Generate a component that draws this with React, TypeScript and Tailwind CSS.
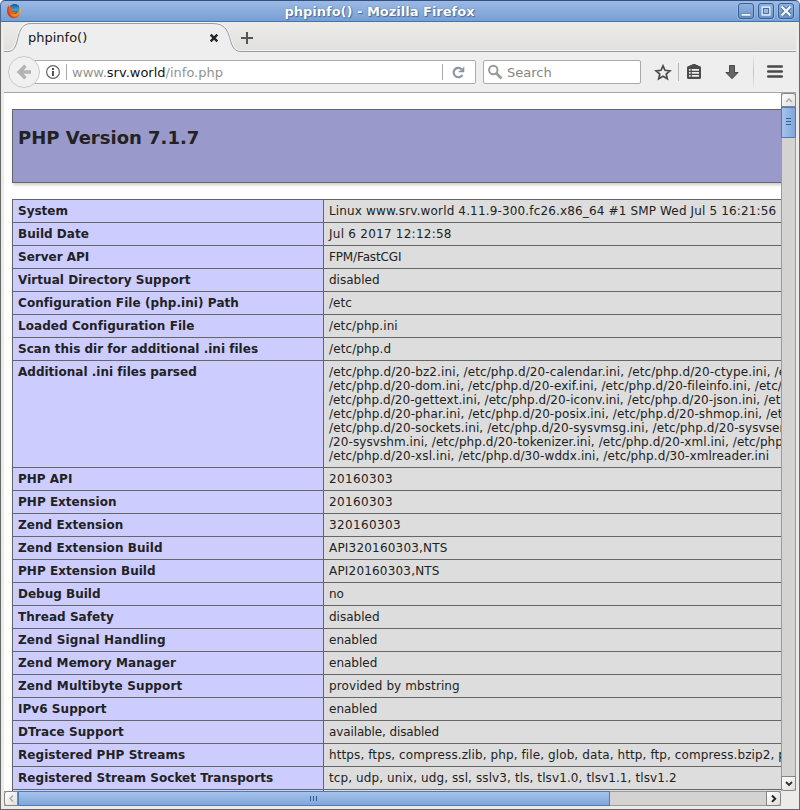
import React from "react";

// A line of table text with its tracking in pixels.
type Line = [text: string, tracking: number];

const rows: { name: Line; value: Line[] }[] = [
  { name: ["System", 0], value: [["Linux www.srv.world 4.11.9-300.fc26.x86_64 #1 SMP Wed Jul 5 16:21:56", 0.152]] },
  { name: ["Build Date", 0.03], value: [["Jul 6 2017 12:12:58", 0.25]] },
  { name: ["Server API", 0], value: [["FPM/FastCGI", -0.14]] },
  { name: ["Virtual Directory Support", 0.05], value: [["disabled", 0]] },
  { name: ["Configuration File (php.ini) Path", 0.07], value: [["/etc", 0]] },
  { name: ["Loaded Configuration File", 0.06], value: [["/etc/php.ini", 0.09]] },
  { name: ["Scan this dir for additional .ini files", 0.02], value: [["/etc/php.d", 0.12]] },
  {
    name: ["Additional .ini files parsed", 0.01],
    value: [
      ["/etc/php.d/20-bz2.ini, /etc/php.d/20-calendar.ini, /etc/php.d/20-ctype.ini, /e", 0.11],
      ["/etc/php.d/20-dom.ini, /etc/php.d/20-exif.ini, /etc/php.d/20-fileinfo.ini, /etc/", 0.085],
      ["/etc/php.d/20-gettext.ini, /etc/php.d/20-iconv.ini, /etc/php.d/20-json.ini, /et", 0.065],
      ["/etc/php.d/20-phar.ini, /etc/php.d/20-posix.ini, /etc/php.d/20-shmop.ini, /et", 0.1],
      ["/etc/php.d/20-sockets.ini, /etc/php.d/20-sysvmsg.ini, /etc/php.d/20-sysvsem", 0.1],
      ["/20-sysvshm.ini, /etc/php.d/20-tokenizer.ini, /etc/php.d/20-xml.ini, /etc/php", 0.07],
      ["/etc/php.d/20-xsl.ini, /etc/php.d/30-wddx.ini, /etc/php.d/30-xmlreader.ini", 0.1],
    ],
  },
  { name: ["PHP API", 0], value: [["20160303", 0.365]] },
  { name: ["PHP Extension", 0.02], value: [["20160303", 0.365]] },
  { name: ["Zend Extension", 0.06], value: [["320160303", 0.365]] },
  { name: ["Zend Extension Build", 0.07], value: [["API320160303,NTS", 0.2]] },
  { name: ["PHP Extension Build", 0.04], value: [["API20160303,NTS", 0.19]] },
  { name: ["Debug Build", 0], value: [["no", 0]] },
  { name: ["Thread Safety", 0.04], value: [["disabled", 0]] },
  { name: ["Zend Signal Handling", 0.13], value: [["enabled", 0]] },
  { name: ["Zend Memory Manager", 0.09], value: [["enabled", 0]] },
  { name: ["Zend Multibyte Support", 0.14], value: [["provided by mbstring", 0.1]] },
  { name: ["IPv6 Support", 0.05], value: [["enabled", 0]] },
  { name: ["DTrace Support", 0.09], value: [["available, disabled", -0.12]] },
  { name: ["Registered PHP Streams", 0.06], value: [["https, ftps, compress.zlib, php, file, glob, data, http, ftp, compress.bzip2, p", 0.105]] },
  { name: ["Registered Stream Socket Transports", 0.06], value: [["tcp, udp, unix, udg, ssl, sslv3, tls, tlsv1.0, tlsv1.1, tlsv1.2", 0.105]] },
];

function FirefoxLogo() {
  return (
    <svg width="16" height="16" viewBox="0 0 16 16" className="ml-[5px] shrink-0">
      <defs>
        <linearGradient id="globe" x1="0" x2="0" y1="0" y2="1">
          <stop offset="0" stopColor="#1c4f94" />
          <stop offset=".6" stopColor="#36a5d4" />
          <stop offset="1" stopColor="#195c9c" />
        </linearGradient>
        <linearGradient id="fox" x1="0" x2="1" y1=".7" y2=".2">
          <stop offset="0" stopColor="#c63818" />
          <stop offset=".6" stopColor="#e76a1b" />
          <stop offset="1" stopColor="#fbd449" />
        </linearGradient>
      </defs>
      <path d="M2.3 2.6C3 3 3 3.5 3.5 3.8 6 1 12 .5 14 4.5 15.8 8 14.5 12 12 14 8.5 16.4 3.5 15 1.8 11.5.4 8.5 1 5 2.3 2.6Z" fill="url(#fox)" />
      <circle cx="8.6" cy="5.9" r="5" fill="url(#globe)" />
      <path d="M3 4.3C4 3.7 5.4 3.9 6 4.5 5.8 5.2 6.3 5.6 7.3 5.8 7.2 6.7 6 7.2 6 8.2 6.8 9.4 8.6 8.8 10 9.2 9.2 11.3 6.5 12 4.2 10.2 2.5 8.8 2.2 6 3 4.3Z" fill="#df6422" />
      <path d="M4 10.2C7 12.5 11.5 11.5 12.6 7.5 13.8 10.5 11.5 13.5 8.5 13.6 6 13.5 4.5 12 4 10.2Z" fill="#f18d28" />
    </svg>
  );
}

function WindowButton({ children }: { children: React.ReactNode }) {
  return (
    <div className="h-4 w-4 rounded-[3px] border border-[#365f96] bg-linear-to-b from-[#8fb1de] to-[#6b94cb] shadow-[0_0_0_0.5px_#a9c3e8]">
      <svg width="14" height="14" viewBox="0 0 14 14" className="block">{children}</svg>
    </div>
  );
}

function TitleBar() {
  return (
    <div className="relative flex h-[22px] items-center rounded-t-[5px] border border-t-[#354f7d] border-r-[#47688f] border-b-[#4872ab] border-l-[#47688f] bg-linear-to-b from-[#9bb9e5] to-[#779fd3]">
      <FirefoxLogo />
      <div className="absolute inset-x-0 top-[3px] text-center text-[13px] leading-[15px] font-bold text-white">
        <span className="relative left-[-20.5px] [text-shadow:0_0_1px_#30588e,1px_1px_1px_#456e9f]">phpinfo() - Mozilla Firefox</span>
      </div>
      <div className="mr-[5px] ml-auto flex gap-1">
        <WindowButton><path d="M2 9h10v3.5H2z" fill="#4f76ab" /><path d="M2.5 9.8h9v2h-9z" fill="#eef4fc" /></WindowButton>
        <WindowButton>
          <path d="M2 2h10v10H2z" fill="#4f76ab" />
          <path d="M3 3h8v8H3z" fill="#8aade0" stroke="#eef4fc" strokeWidth="1.3" />
          <path d="M4.5 4.5h5v5h-5z" fill="#9bbae2" stroke="#486fa5" />
        </WindowButton>
        <WindowButton><path d="m3 3 8 8m0-8-8 8" stroke="#3e6498" strokeWidth="4" /><path d="m2.7 2.7 8.6 8.6m0-8.6-8.6 8.6" stroke="#eef4fc" strokeWidth="2.4" /></WindowButton>
      </div>
    </div>
  );
}

function TabStrip() {
  return (
    <div className="relative h-[30px] bg-linear-to-b from-[#ebebea] to-[#e1e0df] text-[13px]">
      <svg width="792" height="30" className="absolute top-0 left-0">
        <path d="M0 31V29.5H4C18 29.5 9 1.5 27 1.5H209C232 1.5 221 29.5 237 29.5H792V31Z" fill="#eee" stroke="#fff" strokeWidth="3" strokeOpacity=".6" />
        <path d="M0 31V29.5H4C18 29.5 9 1.5 27 1.5H209C232 1.5 221 29.5 237 29.5H792V31Z" fill="#eee" stroke="#999b9f" />
        <path d="m206.7 12.7 6.6 6.6m0-6.6-6.6 6.6" stroke="#252525" strokeWidth="2.4" />
        <path d="M243 10v12m-6-6h12" stroke="#555" strokeWidth="2" />
      </svg>
      <span className="relative top-[8px] left-[24px] block w-[70px] leading-[15px] text-[#151515]">phpinfo()</span>
    </div>
  );
}

function Toolbar() {
  return (
    <div className="flex h-[41px] border-b border-[#a6a6a6] bg-[#eee]">
      <div className="relative z-10 mt-1 ml-1 h-8 w-8 shrink-0 rounded-full border border-[#cacaca] bg-[#f0f0f0]">
        <svg width="30" height="30" viewBox="0 0 30 30"><path d="M22 15H10m6.5-6.2L10.3 15l6.2 6.2" fill="none" stroke="#b3b3b3" strokeWidth="3.6" /></svg>
      </div>
      <div className="mt-2 -ml-[10px] flex h-6 w-[446px] shrink-0 items-center rounded-r-[2px] border border-[#aaa] bg-white pl-[14px]">
        <svg width="16" height="16" viewBox="0 0 16 16" className="shrink-0">
          <circle cx="8" cy="8" r="6.4" fill="none" stroke="#666" strokeWidth="1.2" />
          <path d="M8 4v2M8 7v5" stroke="#555" strokeWidth="2" />
        </svg>
        <div className="ml-[5px] h-4 w-px bg-[#aaa]" />
        <div className="ml-[5px] text-[13px] leading-[15px] whitespace-nowrap text-[#929292]">www.<span className="text-[#151515]">srv.world</span>/info.php</div>
        <div className="ml-auto h-4 w-px bg-[#aaa]" />
        <svg width="16" height="16" viewBox="0 0 16 16" className="mr-2 ml-2 shrink-0">
          <path d="M10.6 5.1A4.7 4.7 0 1 0 11.4 11" fill="none" stroke="#8a96a3" strokeWidth="2.2" />
          <path d="M13.3 2.6V8.2H7.7V6.8H9.2Z" fill="#8a96a3" />
        </svg>
      </div>
      <div className="mt-2 ml-[7px] flex h-6 w-[158px] shrink-0 items-center rounded-[2px] border border-[#aaa] bg-white">
        <svg width="16" height="16" viewBox="0 0 16 16" className="ml-[3px]">
          <circle cx="6.3" cy="6" r="4.2" fill="none" stroke="#999" strokeWidth="2" />
          <path d="m9.5 9.5 5 5" stroke="#999" strokeWidth="2.7" />
        </svg>
        <span className="ml-1 text-[13px] leading-[15px] text-[#858585]">Search</span>
      </div>
      <svg width="150" height="40" viewBox="641 52 150 40" className="shrink-0">
        <defs>
          <linearGradient id="fade" x1="0" x2="0" y1="0" y2="1">
            <stop offset="0" stopColor="#c4c4c4" stopOpacity="0" />
            <stop offset=".5" stopColor="#c4c4c4" />
            <stop offset="1" stopColor="#c4c4c4" stopOpacity="0" />
          </linearGradient>
        </defs>
        <path d="m663 65.8 2 4.5 4.9.5-3.7 3.2 1.1 4.8-4.3-2.5-4.3 2.5 1.1-4.8-3.7-3.2 4.9-.5Z" fill="none" stroke="#4b4b4b" strokeWidth="1.7" />
        <path d="M678.5 63v18" stroke="#b5b5b5" />
        <rect x="687" y="66" width="14" height="13" rx="1.5" fill="#4b4b4b" />
        <path d="M689 67c0-1.5 1-2 2.5-2 1-1.3 4-1.3 5 0 1.5 0 2.5.5 2.5 2Z" fill="#4b4b4b" />
        <path d="M689 69.8h1.6m1.2 0H699M689 72.8h1.6m1.2 0H699M689 75.9h1.6m1.2 0H699" stroke="#eee" strokeWidth="1.7" />
        <path d="M729.5 65.5h5v7h3.6l-6.1 6.2-6.1-6.2h3.6Z" fill="#666" stroke="#484848" />
        <rect x="753" y="54" width="1" height="36" fill="url(#fade)" />
        <path d="M768.3 66.5h13.4m-13.4 5h13.4m-13.4 5h13.4" stroke="#494949" strokeWidth="2.7" strokeLinecap="round" />
      </svg>
    </div>
  );
}

function PhpInfo() {
  return (
    <div className="h-[698px] w-[777px] overflow-hidden bg-white pt-4 pl-2 text-[#222]">
      <div className="h-[74px] w-[934px] border border-[#666] bg-[#9999cc] pt-[17px] pl-[5px] text-[18px] leading-[22px] font-bold shadow-[1px_2px_3px_#ccc]">PHP Version 7.1.7</div>
      <div className="mt-4 w-[934px] border-t border-l border-[#666] text-[12px] leading-[14px] shadow-[1px_2px_3px_#ccc]">
        {rows.map(({ name, value }) => (
          <div key={name[0]} className="flex border-b border-[#666]">
            <div className="w-[311px] shrink-0 border-r border-[#666] bg-[#ccccff] py-1 pl-[5px] font-bold whitespace-nowrap" style={{ letterSpacing: name[1] }}>{name[0]}</div>
            <div className="flex-1 bg-[#ddd] py-1 pl-[5px] whitespace-nowrap">
              {value.map(([text, tracking]) => <div key={text} className="w-fit" style={{ letterSpacing: tracking }}>{text}</div>)}
            </div>
          </div>
        ))}
        <div className="flex h-[22px]">
          <div className="w-[311px] border-r border-[#666] bg-[#ccccff]" />
          <div className="flex-1 bg-[#ddd]" />
        </div>
      </div>
    </div>
  );
}

function VerticalScroll() {
  return (
    <div className="flex h-[698px] w-[15px] flex-col border-x border-[#9b9b99] bg-[#d4d3d1]">
      <div className="-mx-px h-[14px] shrink-0 rounded-t-[3px] border border-[#858585] bg-linear-to-br from-white to-[#dededc]">
        <svg width="13" height="12"><path d="m4 8 3-3 3 3" fill="none" stroke="#aaa" strokeWidth="1.5" /></svg>
      </div>
      <div className="-mx-px flex h-[31px] shrink-0 flex-col items-center justify-center gap-[2px] border border-[#4e7bb4] bg-linear-to-r from-[#a6c3eb] to-[#80a7da] pb-[2px]">
        <i className="h-px w-[5px] bg-[#345e97]" /><i className="h-px w-[5px] bg-[#345e97]" /><i className="h-px w-[5px] bg-[#345e97]" />
      </div>
      <div className="-mx-px mt-auto h-[15px] rounded-b-[3px] border border-[#858585] bg-linear-to-br from-white to-[#dededc]">
        <svg width="13" height="13"><path d="m4 5 3 3 3-3" fill="none" stroke="#303030" strokeWidth="1.8" /></svg>
      </div>
    </div>
  );
}

function HorizontalScroll() {
  return (
    <div className="flex h-[15px] w-[777px] border-y border-[#9b9b99] bg-[#d4d3d1]">
      <div className="-my-px w-[14px] rounded-l-[3px] border border-[#858585] bg-linear-to-br from-white to-[#dededc]">
        <svg width="12" height="13"><path d="m8 3.5-3 3 3 3" fill="none" stroke="#aaa" strokeWidth="1.5" /></svg>
      </div>
      <div className="-my-px flex w-[592px] items-center justify-center gap-[2px] border border-[#4e7bb4] bg-linear-to-b from-[#a6c3eb] to-[#80a7da] pr-[2px]">
        <i className="h-[5px] w-px bg-[#345e97]" /><i className="h-[5px] w-px bg-[#345e97]" /><i className="h-[5px] w-px bg-[#345e97]" />
      </div>
      <div className="-my-px ml-auto w-[15px] rounded-r-[3px] border border-[#858585] bg-linear-to-br from-white to-[#dededc]">
        <svg width="13" height="13"><path d="m5 3.5 3.2 3.2L5 9.9" fill="none" stroke="#252525" strokeWidth="2" /></svg>
      </div>
    </div>
  );
}

export default function App() {
  return (
    <div className="h-[810px] w-[800px] overflow-hidden bg-white font-['DejaVu_Sans',sans-serif]">
      <TitleBar />
      <div className="h-[788px] border-x border-b border-[#696969] bg-[#edebea] px-[3px]">
        <TabStrip />
        <Toolbar />
        <div className="flex h-[714px]">
          <div>
            <PhpInfo />
            <HorizontalScroll />
          </div>
          <VerticalScroll />
        </div>
      </div>
    </div>
  );
}
